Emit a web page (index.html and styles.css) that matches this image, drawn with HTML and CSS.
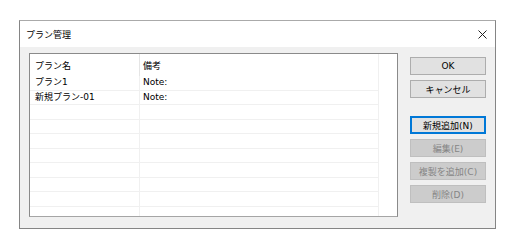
FILE: index.html
```html
<!DOCTYPE html>
<html lang="ja">
<head>
    <meta charset="UTF-8">
    <title>プラン管理</title>
    <link rel="stylesheet" href="styles.css">
</head>
<body>
    <div class="dialog">
        <div class="titlebar">
            <span class="title">プラン管理</span>
            <svg class="close" width="9" height="9" viewBox="0 0 9 9">
                <path d="M0.5 0.5 L8.5 8.5 M8.5 0.5 L0.5 8.5" stroke="#222" stroke-width="1" fill="none"/>
            </svg>
        </div>
        <div class="content">
            <div class="list">
                <div class="grid">
                    <div class="row header">
                        <div class="cell name">プラン名</div>
                        <div class="cell note">備考</div>
                    </div>
                    <div class="row">
                        <div class="cell name">プラン1</div>
                        <div class="cell note">Note:</div>
                    </div>
                    <div class="row">
                        <div class="cell name">新規プラン-01</div>
                        <div class="cell note">Note:</div>
                    </div>
                    <div class="row"><div class="cell name"></div><div class="cell note"></div></div>
                    <div class="row"><div class="cell name"></div><div class="cell note"></div></div>
                    <div class="row"><div class="cell name"></div><div class="cell note"></div></div>
                    <div class="row"><div class="cell name"></div><div class="cell note"></div></div>
                    <div class="row"><div class="cell name"></div><div class="cell note"></div></div>
                    <div class="row"><div class="cell name"></div><div class="cell note"></div></div>
                    <div class="row"><div class="cell name"></div><div class="cell note"></div></div>
                    <div class="row filler"><div class="cell name"></div><div class="cell note"></div></div>
                </div>
            </div>
            <div class="buttons">
                <button class="btn">OK</button>
                <button class="btn">キャンセル</button>
                <button class="btn default gap">新規追加(N)</button>
                <button class="btn" disabled>編集(E)</button>
                <button class="btn" disabled>複製を追加(C)</button>
                <button class="btn" disabled>削除(D)</button>
            </div>
        </div>
    </div>
</body>
</html>
```

FILE: styles.css
```css
body {
    margin: 0;
    padding: 0;
    background: #fff;
    font-family: "DejaVu Sans", "Noto Sans CJK JP", sans-serif;
    font-size: 9px;
    color: #000;
}

.dialog {
    margin: 20px 0 0 19px;
    width: 475px;
    height: 207px;
    border: 1px solid #858585;
    border-top-color: #aaa;
    display: flex;
    flex-direction: column;
}

.titlebar {
    height: 26px;
    background: #fff;
    display: flex;
    align-items: center;
    justify-content: space-between;
    padding: 0 8px 0 6px;
}

.close {
    margin-top: 1px;
}

.content {
    flex: 1;
    background: #f0f0f0;
    display: flex;
    padding: 6px 8px 11px 9px;
    gap: 12px;
}

.list {
    width: 367px;
    background: #fff;
    border: 1px solid #8a8a8a;
    border-bottom-color: #a5a5a5;
    display: flex;
}

.grid {
    width: 348px;
    display: flex;
    flex-direction: column;
    border-right: 1px solid #f0f0f0;
}

.row {
    display: flex;
    height: 14.5px;
    border-bottom: 1px solid #f0f0f0;
    box-sizing: border-box;
    line-height: 13px;
}

.row.header {
    height: 22px;
    border-bottom: none;
    line-height: 24px;
}

.row.filler {
    flex: 1;
    border-bottom: none;
}

.cell {
    box-sizing: border-box;
    padding-left: 5px;
    white-space: nowrap;
}

.cell.name {
    width: 110px;
    border-right: 1px solid #f0f0f0;
}

.header .cell.name {
    border-right-color: #e5e5e5;
}

.cell.note {
    flex: 1;
    padding-left: 3px;
}

.buttons {
    display: flex;
    flex-direction: column;
    gap: 5px;
    padding-top: 4px;
}

.btn {
    width: 76px;
    height: 18px;
    padding: 0;
    background: #e1e1e1;
    border: 1px solid #adadad;
    font-family: inherit;
    font-size: 9px;
    color: #000;
}

.btn.gap {
    margin-top: 13px;
}

.btn.default {
    border-color: #0078d7;
    box-shadow: inset 0 0 0 1px #0078d7;
}

.btn:disabled {
    background: #cccccc;
    border-color: #bfbfbf;
    color: #858585;
}
```
